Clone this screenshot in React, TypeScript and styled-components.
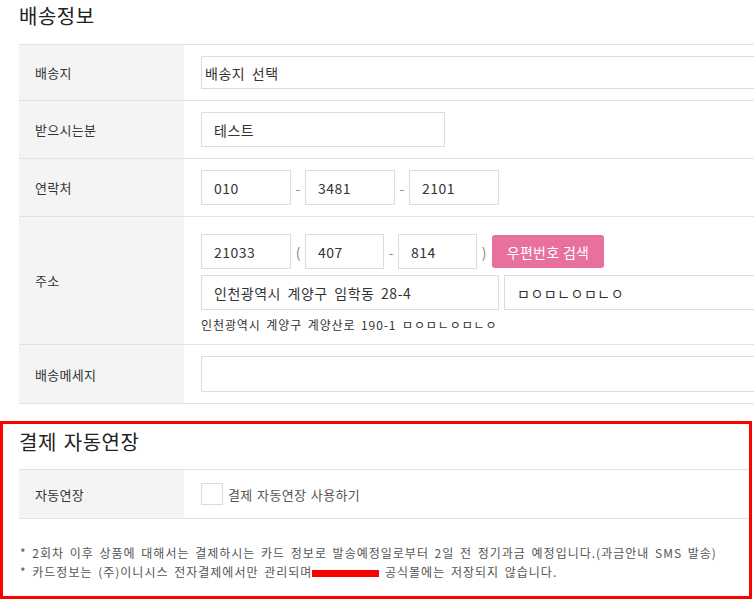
import styled, { createGlobalStyle } from "styled-components";

const GlobalStyle = createGlobalStyle`
  html, body {
    margin: 0;
    padding: 0;
    background: #fff;
    overflow: hidden;
  }
  body {
    font-family: "Noto Sans CJK KR", "Noto Sans", sans-serif;
    color: #333;
  }
`;

export default function App() {
  return (
    <Page>
      <GlobalStyle />
      <Section>
        <Title>배송정보</Title>
        <Table>
          <Row>
            <Label>배송지</Label>
            <Value>
              <Select defaultValue="">
                <option value="">배송지 선택</option>
              </Select>
            </Value>
          </Row>
          <Row>
            <Label>받으시는분</Label>
            <Value>
              <Input $width={244} defaultValue="테스트" />
            </Value>
          </Row>
          <Row>
            <Label>연락처</Label>
            <Value>
              <Line>
                <Input $width={90} defaultValue="010" />
                <Sep>-</Sep>
                <Input $width={90} defaultValue="3481" />
                <Sep>-</Sep>
                <Input $width={90} defaultValue="2101" />
              </Line>
            </Value>
          </Row>
          <Row>
            <Label>주소</Label>
            <AddressValue>
              <Line>
                <Input $width={90} defaultValue="21033" />
                <Sep>(</Sep>
                <Input $width={79} defaultValue="407" />
                <Sep>-</Sep>
                <Input $width={79} defaultValue="814" />
                <Sep>)</Sep>
                <PinkButton type="button">우편번호 검색</PinkButton>
              </Line>
              <Line>
                <Input $width={298} defaultValue="인천광역시 계양구 임학동 28-4" />
                <Input $grow defaultValue="ㅁㅇㅁㄴㅇㅁㄴㅇ" />
              </Line>
              <RoadAddress>인천광역시 계양구 계양산로 190-1 ㅁㅇㅁㄴㅇㅁㄴㅇ</RoadAddress>
            </AddressValue>
          </Row>
          <Row>
            <Label>배송메세지</Label>
            <Value>
              <Input $grow $height={36} />
            </Value>
          </Row>
        </Table>
      </Section>

      <Highlight>
        <Title>결제 자동연장</Title>
        <Table>
          <Row $height={48}>
            <Label>자동연장</Label>
            <Value $tight>
              <CheckLabel>
                <Checkbox type="checkbox" />
                결제 자동연장 사용하기
              </CheckLabel>
            </Value>
          </Row>
        </Table>
        <Notes>
          <p>* 2회차 이후 상품에 대해서는 결제하시는 카드 정보로 발송예정일로부터 2일 전 정기과금 예정입니다.(과금안내 SMS 발송)</p>
          <p>
            * 카드정보는 (주)이니시스 전자결제에서만 관리되며<Redacted /> 공식몰에는 저장되지 않습니다.
          </p>
        </Notes>
      </Highlight>
    </Page>
  );
}

const Page = styled.div`
  width: 754px;
  height: 601px;
  overflow: hidden;
`;

const Section = styled.section`
  padding-left: 19px;
  width: 780px;
`;

const Title = styled.h2`
  margin: 0 0 12px;
  height: 32px;
  line-height: 32px;
  font-size: 20px;
  font-weight: 400;
  letter-spacing: 0.5px;
  word-spacing: 2px;
  color: #222;
`;

const Table = styled.div`
  border-top: 1px solid #e2e2e2;
`;

const Row = styled.div<{ $height?: number }>`
  display: grid;
  grid-template-columns: 165px 1fr;
  border-bottom: 1px solid #e2e2e2;
  ${(p) => (p.$height ? `height: ${p.$height}px;` : "")}
`;

const Label = styled.div`
  background: #f4f4f4;
  display: flex;
  align-items: center;
  padding-left: 16px;
  font-size: 13px;
  letter-spacing: 0.3px;
  color: #333;
`;

const Value = styled.div<{ $tight?: boolean }>`
  display: flex;
  align-items: center;
  padding: ${(p) => (p.$tight ? "0 0 0 17px" : "11px 17px 11px 17px")};
`;

const AddressValue = styled.div`
  display: flex;
  flex-direction: column;
  gap: 6px;
  padding: 17px 17px 10px 17px;
`;

const Line = styled.div`
  display: flex;
  align-items: center;
  width: 100%;
`;

const Input = styled.input<{ $width?: number; $grow?: boolean; $height?: number }>`
  box-sizing: border-box;
  height: ${(p) => p.$height ?? 35}px;
  ${(p) => (p.$width ? `width: ${p.$width}px;` : "")}
  ${(p) => (p.$grow ? "flex: 1; margin-left: 5px; min-width: 0;" : "")}
  &:first-child {
    margin-left: 0;
  }
  border: 1px solid #dcdcdc;
  padding: 0 12px;
  font-family: inherit;
  font-size: 14px;
  letter-spacing: 0.5px;
  word-spacing: 3px;
  color: #333;
  background: #fff;
  outline: none;
`;

const Select = styled.select`
  box-sizing: border-box;
  width: 100%;
  height: 33px;
  border: 1px solid #dcdcdc;
  padding: 0 3px;
  font-family: inherit;
  font-size: 14px;
  letter-spacing: 0.5px;
  word-spacing: 3px;
  color: #333;
  background: #fff;
  appearance: none;
  outline: none;
`;

const Sep = styled.span`
  width: 14px;
  text-align: center;
  font-size: 14px;
  color: #888;
  flex: none;
`;

const PinkButton = styled.button`
  margin-left: 1px;
  width: 112px;
  height: 33px;
  border: none;
  border-radius: 3px;
  background: #e8709f;
  color: #fff;
  font-family: inherit;
  font-size: 14px;
  letter-spacing: 0.3px;
  cursor: pointer;
`;

const RoadAddress = styled.div`
  font-size: 12px;
  line-height: 18px;
  letter-spacing: 0.9px;
  word-spacing: 2px;
  color: #333;
`;

const Highlight = styled.section`
  margin-top: 17px;
  width: 752px;
  box-sizing: border-box;
  border: 3px solid #ff0000;
  padding: 2px 0 15px 16px;
  ${Title} {
    margin-bottom: 11px;
  }
`;

const CheckLabel = styled.label`
  display: flex;
  align-items: center;
  gap: 5px;
  font-size: 13px;
  letter-spacing: 0.4px;
  word-spacing: 1px;
  color: #555;
`;

const Checkbox = styled.input`
  appearance: none;
  margin: 0;
  width: 22px;
  height: 22px;
  border: 1px solid #dcdcdc;
  background: #fff;
  box-sizing: border-box;
`;

const Notes = styled.div`
  margin-top: 24px;
  font-size: 12px;
  line-height: 19px;
  letter-spacing: 1px;
  word-spacing: 2px;
  color: #555;
  p {
    margin: 0;
    padding-left: 1px;
  }
`;

const Redacted = styled.span`
  display: inline-block;
  width: 67px;
  height: 7px;
  background: #ff0000;
  vertical-align: middle;
`;
